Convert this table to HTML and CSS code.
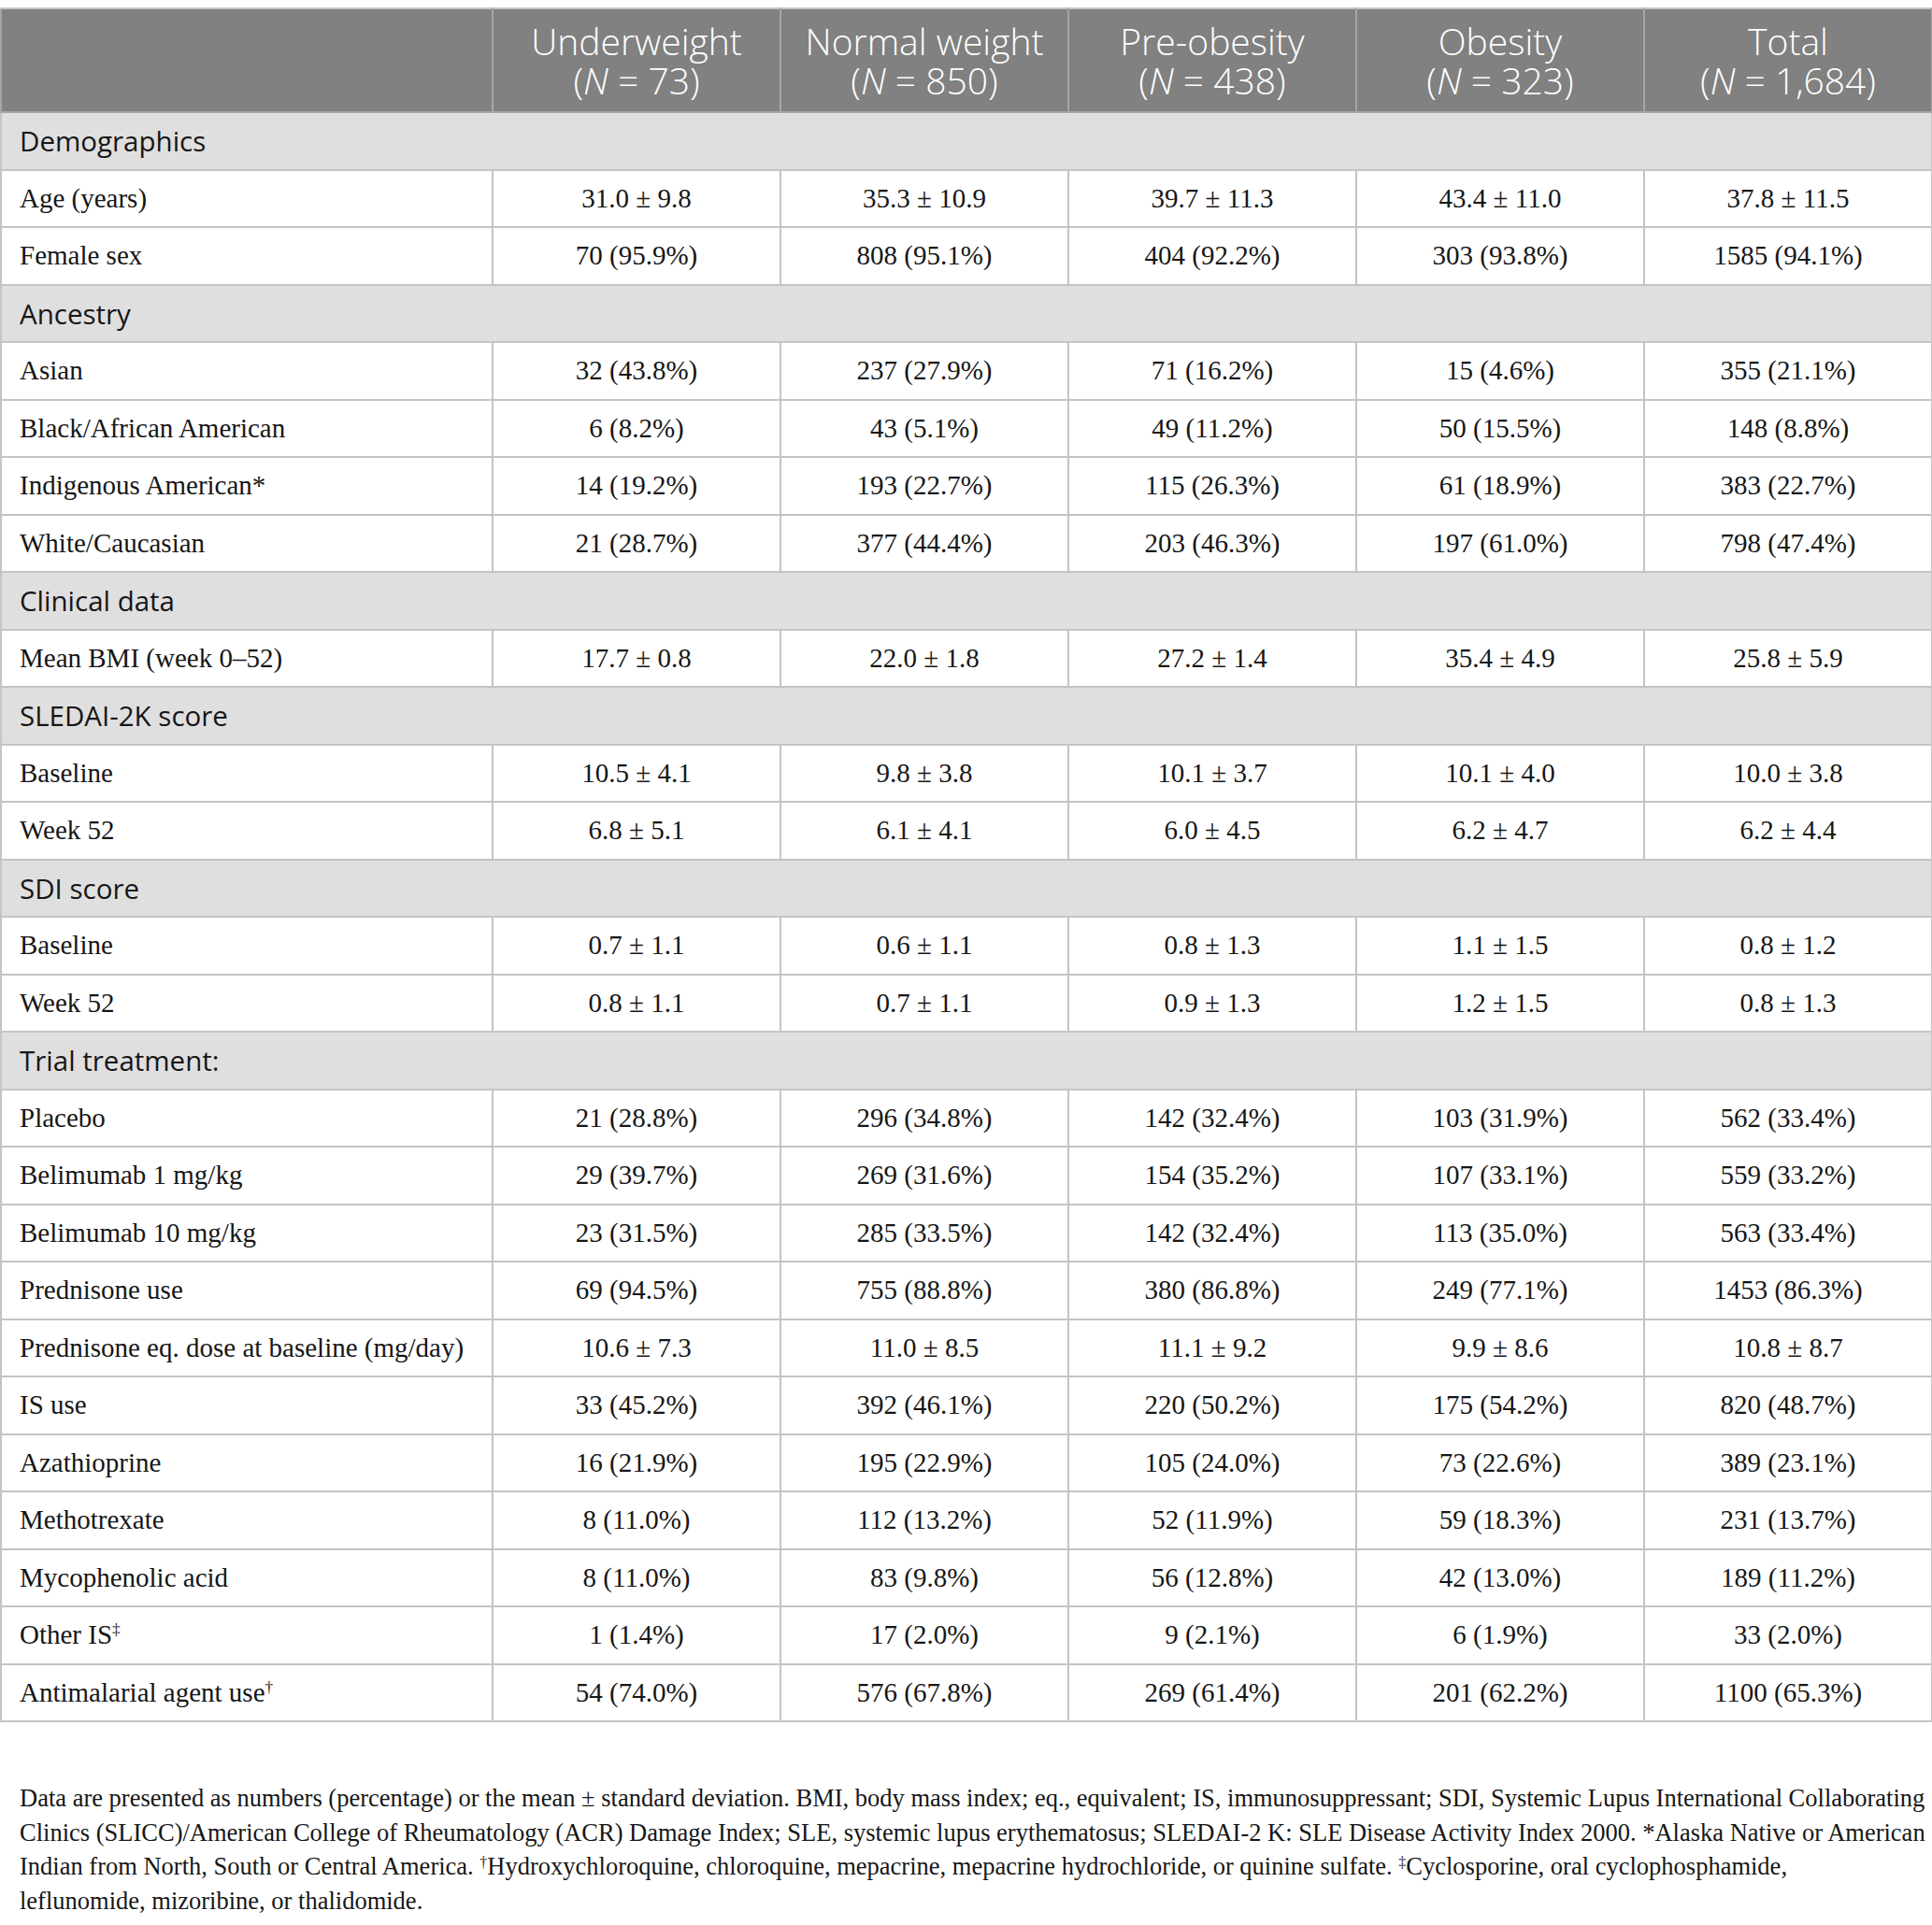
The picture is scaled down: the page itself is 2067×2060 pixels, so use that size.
FILE: index.html
```html
<!DOCTYPE html>
<html lang="en">
<head>
<meta charset="utf-8">
<title>Table</title>
<link rel="stylesheet" href="styles.css">
</head>
<body>
<table class="data">
  <colgroup>
    <col class="c-label"><col class="c-num"><col class="c-num"><col class="c-num"><col class="c-num"><col class="c-num">
  </colgroup>
  <thead>
    <tr class="head">
      <th></th>
      <th>Underweight<br>(<i>N</i> = 73)</th>
      <th>Normal weight<br>(<i>N</i> = 850)</th>
      <th>Pre-obesity<br>(<i>N</i> = 438)</th>
      <th>Obesity<br>(<i>N</i> = 323)</th>
      <th>Total<br>(<i>N</i> = 1,684)</th>
    </tr>
  </thead>
  <tbody>
    <tr class="sec"><td colspan="6">Demographics</td></tr>
    <tr><td>Age (years)</td><td>31.0 ± 9.8</td><td>35.3 ± 10.9</td><td>39.7 ± 11.3</td><td>43.4 ± 11.0</td><td>37.8 ± 11.5</td></tr>
    <tr><td>Female sex</td><td>70 (95.9%)</td><td>808 (95.1%)</td><td>404 (92.2%)</td><td>303 (93.8%)</td><td>1585 (94.1%)</td></tr>
    <tr class="sec"><td colspan="6">Ancestry</td></tr>
    <tr><td>Asian</td><td>32 (43.8%)</td><td>237 (27.9%)</td><td>71 (16.2%)</td><td>15 (4.6%)</td><td>355 (21.1%)</td></tr>
    <tr><td>Black/African American</td><td>6 (8.2%)</td><td>43 (5.1%)</td><td>49 (11.2%)</td><td>50 (15.5%)</td><td>148 (8.8%)</td></tr>
    <tr><td>Indigenous American*</td><td>14 (19.2%)</td><td>193 (22.7%)</td><td>115 (26.3%)</td><td>61 (18.9%)</td><td>383 (22.7%)</td></tr>
    <tr><td>White/Caucasian</td><td>21 (28.7%)</td><td>377 (44.4%)</td><td>203 (46.3%)</td><td>197 (61.0%)</td><td>798 (47.4%)</td></tr>
    <tr class="sec"><td colspan="6">Clinical data</td></tr>
    <tr><td>Mean BMI (week 0–52)</td><td>17.7 ± 0.8</td><td>22.0 ± 1.8</td><td>27.2 ± 1.4</td><td>35.4 ± 4.9</td><td>25.8 ± 5.9</td></tr>
    <tr class="sec"><td colspan="6">SLEDAI-2K score</td></tr>
    <tr><td>Baseline</td><td>10.5 ± 4.1</td><td>9.8 ± 3.8</td><td>10.1 ± 3.7</td><td>10.1 ± 4.0</td><td>10.0 ± 3.8</td></tr>
    <tr><td>Week 52</td><td>6.8 ± 5.1</td><td>6.1 ± 4.1</td><td>6.0 ± 4.5</td><td>6.2 ± 4.7</td><td>6.2 ± 4.4</td></tr>
    <tr class="sec"><td colspan="6">SDI score</td></tr>
    <tr><td>Baseline</td><td>0.7 ± 1.1</td><td>0.6 ± 1.1</td><td>0.8 ± 1.3</td><td>1.1 ± 1.5</td><td>0.8 ± 1.2</td></tr>
    <tr><td>Week 52</td><td>0.8 ± 1.1</td><td>0.7 ± 1.1</td><td>0.9 ± 1.3</td><td>1.2 ± 1.5</td><td>0.8 ± 1.3</td></tr>
    <tr class="sec"><td colspan="6">Trial treatment:</td></tr>
    <tr><td>Placebo</td><td>21 (28.8%)</td><td>296 (34.8%)</td><td>142 (32.4%)</td><td>103 (31.9%)</td><td>562 (33.4%)</td></tr>
    <tr><td>Belimumab 1 mg/kg</td><td>29 (39.7%)</td><td>269 (31.6%)</td><td>154 (35.2%)</td><td>107 (33.1%)</td><td>559 (33.2%)</td></tr>
    <tr><td>Belimumab 10 mg/kg</td><td>23 (31.5%)</td><td>285 (33.5%)</td><td>142 (32.4%)</td><td>113 (35.0%)</td><td>563 (33.4%)</td></tr>
    <tr><td>Prednisone use</td><td>69 (94.5%)</td><td>755 (88.8%)</td><td>380 (86.8%)</td><td>249 (77.1%)</td><td>1453 (86.3%)</td></tr>
    <tr><td>Prednisone eq. dose at baseline (mg/day)</td><td>10.6 ± 7.3</td><td>11.0 ± 8.5</td><td>11.1 ± 9.2</td><td>9.9 ± 8.6</td><td>10.8 ± 8.7</td></tr>
    <tr><td>IS use</td><td>33 (45.2%)</td><td>392 (46.1%)</td><td>220 (50.2%)</td><td>175 (54.2%)</td><td>820 (48.7%)</td></tr>
    <tr><td>Azathioprine</td><td>16 (21.9%)</td><td>195 (22.9%)</td><td>105 (24.0%)</td><td>73 (22.6%)</td><td>389 (23.1%)</td></tr>
    <tr><td>Methotrexate</td><td>8 (11.0%)</td><td>112 (13.2%)</td><td>52 (11.9%)</td><td>59 (18.3%)</td><td>231 (13.7%)</td></tr>
    <tr><td>Mycophenolic acid</td><td>8 (11.0%)</td><td>83 (9.8%)</td><td>56 (12.8%)</td><td>42 (13.0%)</td><td>189 (11.2%)</td></tr>
    <tr><td>Other IS<sup>‡</sup></td><td>1 (1.4%)</td><td>17 (2.0%)</td><td>9 (2.1%)</td><td>6 (1.9%)</td><td>33 (2.0%)</td></tr>
    <tr><td>Antimalarial agent use<sup>†</sup></td><td>54 (74.0%)</td><td>576 (67.8%)</td><td>269 (61.4%)</td><td>201 (62.2%)</td><td>1100 (65.3%)</td></tr>
  </tbody>
</table>
<p class="notes">Data are presented as numbers (percentage) or the mean ± standard deviation. BMI, body mass index; eq., equivalent; IS, immunosuppressant; SDI, Systemic Lupus International Collaborating Clinics (SLICC)/American College of Rheumatology (ACR) Damage Index; SLE, systemic lupus erythematosus; SLEDAI-2 K: SLE Disease Activity Index 2000. *Alaska Native or American Indian from North, South or Central America. <sup>†</sup>Hydroxychloroquine, chloroquine, mepacrine, mepacrine hydrochloride, or quinine sulfate. <sup>‡</sup>Cyclosporine, oral cyclophosphamide,<br>leflunomide, mizoribine, or thalidomide.</p>
</body>
</html>
```

FILE: styles.css
```css
html, body {
  background: #ffffff;
}
body {
  margin: 8px 0 0 0;
  font-family: "Liberation Serif", "Times New Roman", serif;
  color: #161616;
}
.data {
  width: 2067px;
  border-collapse: collapse;
  table-layout: fixed;
  font-size: 29px;
}
.c-label { width: 526px; }
.c-num { width: 308px; }
.data td, .data th {
  border: 2px solid #c4c4c4;
  padding: 0;
}
.head th {
  height: 109px;
  background: #808180;
  color: #ffffff;
  font-family: "Open Sans", "Noto Sans", sans-serif;
  font-weight: 300;
  font-size: 39px;
  line-height: 42px;
  text-align: center;
  border-color: #a6a6a6;
  border-top-color: #c4c4c4;
}
.data tbody td {
  height: 59.5px;
  text-align: center;
  vertical-align: middle;
}
.data tbody td:first-child {
  text-align: left;
  padding-left: 19px;
}
.sec td {
  background: #e0dfe0;
  font-family: "Open Sans", "Noto Sans", sans-serif;
  font-size: 29.5px;
}
.data sup {
  font-size: 60%;
  line-height: 0;
  vertical-align: 0.6em;
}
.notes {
  margin: 63px 4px 0 21px;
  font-size: 26.5px;
  line-height: 36.5px;
}
.notes sup {
  font-size: 60%;
  line-height: 0;
  vertical-align: 0.5em;
}
```
